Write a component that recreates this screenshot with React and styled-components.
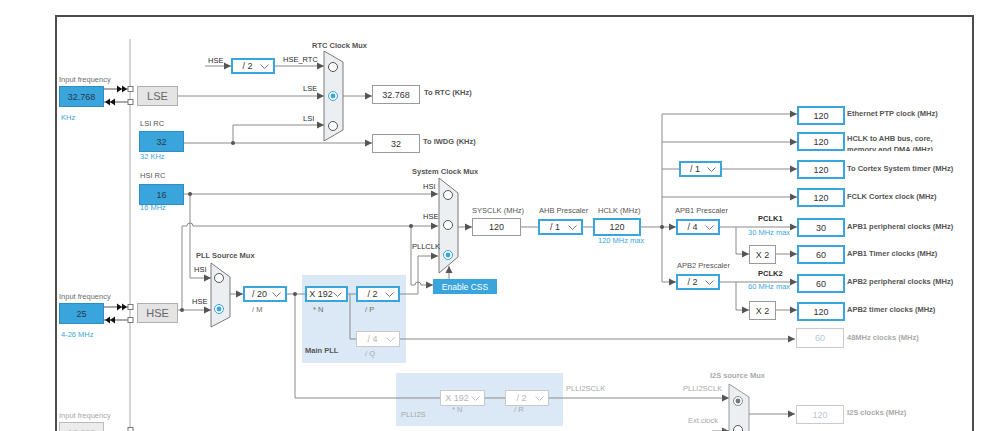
import React from "react";
import styled, { createGlobalStyle } from "styled-components";

// diagram coordinates are page pixels; the frame's padding box starts at (57,17)
const OX = 57;
const OY = 17;
const BLUE = "#39a5dc";

const GlobalStyle = createGlobalStyle`
  html, body { margin: 0; padding: 0; background: #fff; }
  body { font-family: "Liberation Sans", Arial, sans-serif; }
`;

const at = (p) => `left: ${p.$x - OX}px; top: ${p.$y - OY}px;`;

const tones = {
  dark: "#2b2b2b",
  label: "#555",
  muted: "#6f6f6f",
  blue: "#3aa6dd",
  faint: "#a9a9a9",
};

const Stage = styled.div`
  width: 998px;
  height: 431px;
  overflow: hidden;
  box-sizing: border-box;
  padding: 15px 0 0 55px;
`;

const Frame = styled.div`
  position: relative;
  width: 919px;
  height: 470px;
  box-sizing: border-box;
  border: 2px solid #4d4d4d;
  background: #fff;
`;

const Wires = styled.svg`
  position: absolute;
  left: 0;
  top: 0;
  pointer-events: none;
`;

const Text = styled.span`
  position: absolute;
  ${at};
  font-size: ${(p) => p.$size || 7.5}px;
  font-weight: ${(p) => (p.$bold ? 700 : 400)};
  color: ${(p) => tones[p.$tone || "label"]};
  white-space: nowrap;
  line-height: 1;
  transform: translateY(-50%);
`;

const TwoLine = styled.div`
  position: absolute;
  ${at};
  height: 18px;
  overflow: hidden;
  font-size: 7.5px;
  font-weight: 700;
  line-height: 11px;
  color: #555;
  white-space: nowrap;
`;

const Value = styled.div`
  position: absolute;
  ${at};
  width: ${(p) => p.$w || 48}px;
  height: ${(p) => p.$h || 19}px;
  box-sizing: border-box;
  display: flex;
  align-items: center;
  justify-content: center;
  background: #fff;
  border: ${(p) =>
    p.$active ? `2px solid ${BLUE}` : `1px solid ${p.$disabled ? "#cacaca" : "#9a9a9a"}`};
  color: ${(p) => (p.$disabled ? "#b8c8d6" : "#333")};
  font-size: 9px;
`;

const Source = styled.div`
  position: absolute;
  ${at};
  width: 45px;
  height: 21px;
  box-sizing: border-box;
  display: flex;
  align-items: center;
  justify-content: center;
  background: ${(p) => (p.$disabled ? "#ececec" : BLUE)};
  border: 1px solid ${(p) => (p.$disabled ? "#bcbcbc" : "#2e8ec2")};
  color: ${(p) => (p.$disabled ? "#b5b5b5" : "#2a3a48")};
  font-size: 9px;
`;

const Osc = styled.div`
  position: absolute;
  ${at};
  width: 41px;
  height: 20px;
  box-sizing: border-box;
  display: flex;
  align-items: center;
  justify-content: center;
  background: #e4e4e4;
  border: 1px solid #b0b0b0;
  color: #666;
  font-size: 11px;
`;

const SelectBox = styled.div`
  position: absolute;
  ${at};
  width: ${(p) => p.$w || 44}px;
  height: 16px;
  box-sizing: border-box;
  display: flex;
  align-items: center;
  padding: 0 4px 0 2px;
  background: #fff;
  border: ${(p) => (p.$disabled ? "1px solid #c9c9c9" : `2px solid ${BLUE}`)};
  color: ${(p) => (p.$disabled ? "#b5b5b5" : "#333")};
  font-size: 9px;

  span {
    flex: 1;
    text-align: center;
  }
`;

const Panel = styled.div`
  position: absolute;
  ${at};
  width: ${(p) => p.$w}px;
  height: ${(p) => p.$h}px;
  background: #dbe8f5;
`;

const Button = styled.div`
  position: absolute;
  ${at};
  width: 64px;
  height: 15px;
  display: flex;
  align-items: center;
  justify-content: center;
  background: ${BLUE};
  color: #fff;
  font-size: 8.5px;
`;

const Chevron = ({ color = "#777" }) => (
  <svg width="9" height="5" viewBox="0 0 9 5">
    <polyline points="0.5,0.5 4.5,4.5 8.5,0.5" fill="none" stroke={color} strokeWidth="1" />
  </svg>
);

const Select = ({ x, y, w, disabled, children }) => (
  <SelectBox $x={x} $y={y} $w={w} $disabled={disabled}>
    <span>{children}</span>
    <Chevron color={disabled ? "#c4c4c4" : "#777"} />
  </SelectBox>
);

const paths = [
  "M177 96 H324",
  "M205 66 H231",
  "M275 66 H324",
  "M343 96 H372",
  "M184 143 H372",
  "M233 143 V125 H324",
  "M184 194 H438",
  "M190 194 V278 H211",
  "M177 310 H211",
  "M182 310 V226 H187 A3 3 0 0 1 193 226 H438",
  "M411 226 V285 H415 A3 3 0 0 1 421 285 H433",
  "M400 294 H418 V256 H438",
  "M449 279 V266",
  "M457 227 H472",
  "M521 227 H538",
  "M583 227 H593",
  "M641 227 H662",
  "M662 114 V282",
  "M662 114 H797",
  "M662 142 H797",
  "M662 169 H679",
  "M722 169 H797",
  "M662 197 H797",
  "M662 227 H676",
  "M720 227 H797",
  "M736 227 V254 H749",
  "M776 254 H797",
  "M662 282 H676",
  "M720 282 H797",
  "M736 282 V310 H749",
  "M776 310 H797",
  "M230 294 H243",
  "M287 294 H305",
  "M295 294 V398 H440",
  "M348 294 H356",
  "M350 294 V339 H356",
  "M400 339 H795",
  "M485 398 H505",
  "M549 398 H729",
  "M749 414 H795",
  "M712 431 H729",
];

const arrowsRight = [
  [324, 96], [231, 66], [324, 66], [372, 96], [372, 143], [324, 125],
  [438, 194], [211, 278], [211, 310], [438, 226], [433, 285], [438, 256],
  [472, 227], [797, 114], [797, 142], [797, 169], [797, 197], [676, 227],
  [797, 227], [749, 254], [797, 254], [676, 282], [797, 282], [749, 310],
  [797, 310], [243, 294], [795, 339], [729, 398], [795, 414], [729, 431],
];

const dots = [[233, 143], [190, 194], [182, 310], [411, 226], [662, 227], [295, 294]];
const ports = [89, 102, 307, 320, 430];

const right = (x, y, l = 7, h = 3.5) => `${x - l},${y - h} ${x},${y} ${x - l},${y + h}`;
const left = (x, y, l = 5, h = 3.5) => `${x + l},${y - h} ${x},${y} ${x + l},${y + h}`;

const Mux = ({ pts, radios, selected, disabled }) => (
  <g>
    <polygon points={pts} fill="#eceff2" stroke={disabled ? "#999" : "#7a7a7a"} strokeWidth="1" />
    {radios.map(([cx, cy], i) => (
      <g key={i}>
        <circle cx={cx} cy={cy} r="4.5" fill="#fff"
          stroke={i === selected ? (disabled ? "#888" : BLUE) : "#555"} strokeWidth="1" />
        {i === selected && <circle cx={cx} cy={cy} r="2.4" fill={disabled ? "#777" : BLUE} />}
      </g>
    ))}
  </g>
);

const Diagram = () => (
  <Wires width="914" height="470" viewBox={`${OX} ${OY} 914 470`}>
    <line x1="130" y1="39" x2="130" y2="440" stroke="#aaa" strokeWidth="1" />
    {[89, 307].map((y) => (
      <g key={y}>
        <line x1="104" y1={y} x2="128" y2={y} stroke="#555" />
        <line x1="104" y1={y + 13} x2="128" y2={y + 13} stroke="#555" />
        <polygon points={right(122, y, 5)} fill="#111" />
        <polygon points={right(127, y, 5)} fill="#111" />
        <polygon points={left(105, y + 13)} fill="#111" />
        <polygon points={left(110, y + 13)} fill="#111" />
      </g>
    ))}
    {paths.map((d) => (
      <path key={d} d={d} fill="none" stroke="#8a8a8a" strokeWidth="1" />
    ))}
    {arrowsRight.map(([x, y]) => (
      <polygon key={`${x}-${y}`} points={right(x, y)} fill="#555" />
    ))}
    <polygon points="445.5,273 449,266 452.5,273" fill="#555" />
    {dots.map(([x, y]) => (
      <circle key={`${x}-${y}`} cx={x} cy={y} r="2" fill="#555" />
    ))}
    {ports.map((y) => (
      <rect key={y} x="128" y={y - 2.5} width="5" height="5" fill="#fff" stroke="#777" />
    ))}
    <Mux pts="324,51 343,62 343,130 324,141" radios={[[333, 67], [333, 96], [333, 126]]} selected={1} />
    <Mux pts="439,178 458,193 458,257 439,273" radios={[[448, 195], [448, 225], [448, 255]]} selected={2} />
    <Mux pts="211,263 230,277 230,317 211,327" radios={[[219, 278], [219, 309]]} selected={1} />
    <Mux pts="729,384 749,397 749,470 729,470" radios={[[738, 401], [738, 430]]} selected={0} disabled />
  </Wires>
);

export default function App() {
  return (
    <Stage>
      <GlobalStyle />
      <Frame>
        <Panel $x={302} $y={275} $w={104} $h={88} />
        <Panel $x={396} $y={373} $w={167} $h={53} />
        <Diagram />

        {/* low speed + HSI sources */}
        <Text $x={59} $y={80} $tone="muted">Input frequency</Text>
        <Source $x={59} $y={86}>32.768</Source>
        <Text $x={61} $y={118} $tone="blue">KHz</Text>
        <Osc $x={137} $y={86}>LSE</Osc>
        <Text $x={140} $y={124}>LSI RC</Text>
        <Source $x={139} $y={131}>32</Source>
        <Text $x={140} $y={157} $tone="blue">32 KHz</Text>
        <Text $x={140} $y={176}>HSI RC</Text>
        <Source $x={139} $y={184}>16</Source>
        <Text $x={140} $y={208} $tone="blue">16 MHz</Text>

        <Text $x={59} $y={297} $tone="muted">Input frequency</Text>
        <Source $x={59} $y={303}>25</Source>
        <Text $x={61} $y={335} $tone="blue">4-26 MHz</Text>
        <Osc $x={137} $y={303}>HSE</Osc>
        <Text $x={59} $y={416} $tone="faint">Input frequency</Text>
        <Source $x={59} $y={422} $disabled>12.288</Source>

        {/* RTC */}
        <Text $x={208} $y={61} $tone="dark">HSE</Text>
        <Select x={231} y={58}>/ 2</Select>
        <Text $x={283} $y={60} $tone="dark">HSE_RTC</Text>
        <Text $x={303} $y={89} $tone="dark">LSE</Text>
        <Text $x={303} $y={119} $tone="dark">LSI</Text>
        <Text $x={312} $y={46} $bold>RTC Clock Mux</Text>
        <Value $x={372} $y={85}>32.768</Value>
        <Text $x={424} $y={93} $bold>To RTC (KHz)</Text>
        <Value $x={372} $y={134}>32</Value>
        <Text $x={423} $y={142} $bold>To IWDG (KHz)</Text>

        {/* system clock */}
        <Text $x={412} $y={172} $bold>System Clock Mux</Text>
        <Text $x={423} $y={187} $tone="dark">HSI</Text>
        <Text $x={423} $y={217} $tone="dark">HSE</Text>
        <Text $x={412} $y={247} $tone="dark">PLLCLK</Text>
        <Button $x={433} $y={279}>Enable CSS</Button>
        <Text $x={472} $y={211}>SYSCLK (MHz)</Text>
        <Value $x={472} $y={218} $w={49} $h={18}>120</Value>
        <Text $x={539} $y={211}>AHB Prescaler</Text>
        <Select x={538} y={219} w={45}>/ 1</Select>
        <Text $x={598} $y={211}>HCLK (MHz)</Text>
        <Value $x={593} $y={218} $h={18} $active>120</Value>
        <Text $x={598} $y={241} $tone="blue">120 MHz max</Text>

        {/* PLL */}
        <Text $x={196} $y={256} $bold>PLL Source Mux</Text>
        <Text $x={194} $y={270} $tone="dark">HSI</Text>
        <Text $x={192} $y={302} $tone="dark">HSE</Text>
        <Select x={243} y={286}>/ 20</Select>
        <Text $x={252} $y={310} $tone="muted">/ M</Text>
        <Select x={305} y={286} w={43}>X 192</Select>
        <Text $x={313} $y={310} $tone="muted">* N</Text>
        <Select x={356} y={286}>/ 2</Select>
        <Text $x={365} $y={310} $tone="muted">/ P</Text>
        <Select x={356} y={331} disabled>/ 4</Select>
        <Text $x={365} $y={354} $tone="faint">/ Q</Text>
        <Text $x={305} $y={351} $bold>Main PLL</Text>

        <Select x={440} y={390} w={45} disabled>X 192</Select>
        <Text $x={452} $y={410} $tone="faint">* N</Text>
        <Select x={505} y={390} disabled>/ 2</Select>
        <Text $x={514} $y={410} $tone="faint">/ R</Text>
        <Text $x={401} $y={415} $tone="faint">PLLI2S</Text>
        <Text $x={566} $y={389} $tone="faint">PLLI2SCLK</Text>
        <Text $x={683} $y={389} $tone="faint">PLLI2SCLK</Text>
        <Text $x={710} $y={376} $tone="faint" $bold>I2S source Mux</Text>
        <Text $x={688} $y={421} $tone="faint">Ext.clock</Text>

        {/* outputs */}
        <Value $x={797} $y={106} $active>120</Value>
        <Text $x={847} $y={114} $bold>Ethernet PTP clock (MHz)</Text>
        <Value $x={797} $y={132} $active>120</Value>
        <TwoLine $x={847} $y={133}>
          HCLK to AHB bus, core,
          <br />
          memory and DMA (MHz)
        </TwoLine>
        <Select x={679} y={161} w={43}>/ 1</Select>
        <Value $x={797} $y={160} $active>120</Value>
        <Text $x={847} $y={169} $bold>To Cortex System timer (MHz)</Text>
        <Value $x={797} $y={188} $active>120</Value>
        <Text $x={847} $y={197} $bold>FCLK Cortex clock (MHz)</Text>

        <Text $x={675} $y={211}>APB1 Prescaler</Text>
        <Select x={676} y={219}>/ 4</Select>
        <Text $x={758} $y={219} $tone="dark" $bold>PCLK1</Text>
        <Text $x={748} $y={233} $tone="blue">30 MHz max</Text>
        <Value $x={797} $y={218} $active>30</Value>
        <Text $x={847} $y={227} $bold>APB1 peripheral clocks (MHz)</Text>
        <Value $x={749} $y={245} $w={27}>X 2</Value>
        <Value $x={797} $y={245} $active>60</Value>
        <Text $x={847} $y={254} $bold>APB1 Timer clocks (MHz)</Text>

        <Text $x={677} $y={266}>APB2 Prescaler</Text>
        <Select x={676} y={274}>/ 2</Select>
        <Text $x={758} $y={274} $tone="dark" $bold>PCLK2</Text>
        <Text $x={748} $y={287} $tone="blue">60 MHz max</Text>
        <Value $x={797} $y={274} $active>60</Value>
        <Text $x={847} $y={282} $bold>APB2 peripheral clocks (MHz)</Text>
        <Value $x={749} $y={301} $w={27}>X 2</Value>
        <Value $x={797} $y={302} $active>120</Value>
        <Text $x={847} $y={310} $bold>APB2 timer clocks (MHz)</Text>

        <Value $x={796} $y={328} $h={20} $disabled>60</Value>
        <Text $x={847} $y={338} $tone="faint" $bold>48MHz clocks (MHz)</Text>
        <Value $x={796} $y={405} $disabled>120</Value>
        <Text $x={847} $y={413} $tone="faint" $bold>I2S clocks (MHz)</Text>
      </Frame>
    </Stage>
  );
}
